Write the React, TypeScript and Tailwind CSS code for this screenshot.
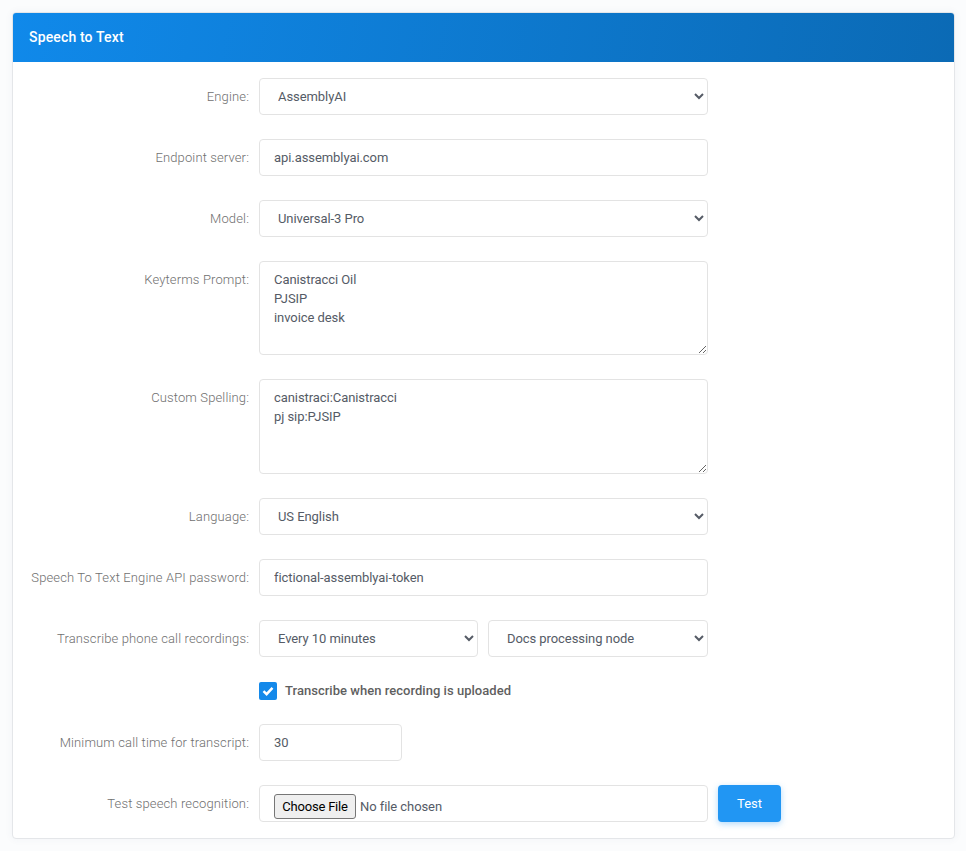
import { ReactNode } from "react";

const fieldClass =
  "h-[37px] w-full rounded-[4px] border border-[#e3e3e3] bg-white px-[14px] text-[13px] tracking-[-0.07px] text-[#555b66] outline-none";

const textareaClass =
  "block w-full rounded-[4px] border border-[#e3e3e3] bg-white px-[14px] py-[8px] text-[13px] leading-[19px] tracking-[-0.07px] text-[#555b66] outline-none";

const labelClass =
  "w-[246px] shrink-0 pt-[9px] pr-[10px] text-right text-[13px] leading-[19px] font-light tracking-[0.13px] text-[#6f6f6f]";

function Row({ label, children }: { label?: string; children: ReactNode }) {
  return (
    <div className="flex items-start">
      <label className={labelClass}>{label}</label>
      <div className="flex w-[449px] shrink-0 gap-[10px]">{children}</div>
    </div>
  );
}

function Select({ value, options }: { value: string; options?: string[] }) {
  return (
    <select className={fieldClass} defaultValue={value}>
      {(options ?? [value]).map((o) => (
        <option key={o}>{o}</option>
      ))}
    </select>
  );
}

export default function App() {
  return (
    <div className="min-h-[851px] bg-[#fbfcfd] p-3 font-['Roboto',sans-serif]">
      <div className="w-[943px] overflow-hidden rounded-[4px] border border-[#e4e6e9] bg-white shadow-[0_0_8px_rgba(60,80,120,0.05)]">
        <div className="flex h-[49px] items-center bg-[linear-gradient(100deg,#1089ea,#0b6ab5)] px-4 text-[14px] font-medium tracking-[0.15px] text-white">
          Speech to Text
        </div>
        <form className="flex flex-col gap-6 py-4">
          <Row label="Engine:">
            <Select value="AssemblyAI" />
          </Row>
          <Row label="Endpoint server:">
            <input className={fieldClass} defaultValue="api.assemblyai.com" />
          </Row>
          <Row label="Model:">
            <Select value="Universal-3 Pro" />
          </Row>
          <Row label="Keyterms Prompt:">
            <textarea
              className={textareaClass + " h-[94px]"}
              defaultValue={"Canistracci Oil\nPJSIP\ninvoice desk"}
            />
          </Row>
          <Row label="Custom Spelling:">
            <textarea
              className={textareaClass + " h-[95px]"}
              defaultValue={"canistraci:Canistracci\npj sip:PJSIP"}
            />
          </Row>
          <Row label="Language:">
            <Select value="US English" />
          </Row>
          <Row label="Speech To Text Engine API password:">
            <input className={fieldClass} defaultValue="fictional-assemblyai-token" />
          </Row>
          <Row label="Transcribe phone call recordings:">
            <div className="w-[219px]">
              <Select value="Every 10 minutes" />
            </div>
            <div className="w-[220px]">
              <Select value="Docs processing node" />
            </div>
          </Row>
          <div className="flex h-[19px] items-center pl-[246px]">
            <span className="mt-[1px] flex h-[18px] w-[18px] items-center justify-center rounded-[2px] bg-[#1489ea]">
              <svg viewBox="0 0 12 12" className="h-3 w-3" fill="none" stroke="white" strokeWidth="2.5">
                <path d="M1.5 6.2 4.6 9.2 10.5 2.8" />
              </svg>
            </span>
            <span className="ml-2 text-[13px] font-medium tracking-[0.03px] text-[#5f5f5f]">
              Transcribe when recording is uploaded
            </span>
          </div>
          <Row label="Minimum call time for transcript:">
            <div className="w-[143px]">
              <input className={fieldClass} defaultValue="30" />
            </div>
          </Row>
          <div className="flex items-start">
            <label className={labelClass}>Test speech recognition:</label>
            <div className="w-[449px] shrink-0">
              <input
                type="file"
                className="h-[37px] w-full rounded-[4px] border border-[#e3e3e3] bg-white px-[14px] pt-[8px] text-[13px] tracking-[-0.07px] text-[#555b66] outline-none file:mr-1 file:h-[25px] file:w-[82px] file:rounded-[3px] file:border file:border-[#767676] file:bg-[#efefef] file:px-0 file:text-[13px] file:tracking-[-0.2px] file:text-black"
              />
            </div>
            <button
              type="button"
              className="ml-[10px] h-[37px] w-[63px] rounded-[4px] bg-[#2196f3] text-[13px] text-white shadow-[0_2px_6px_rgba(33,150,243,0.35)]"
            >
              Test
            </button>
          </div>
        </form>
      </div>
    </div>
  );
}
